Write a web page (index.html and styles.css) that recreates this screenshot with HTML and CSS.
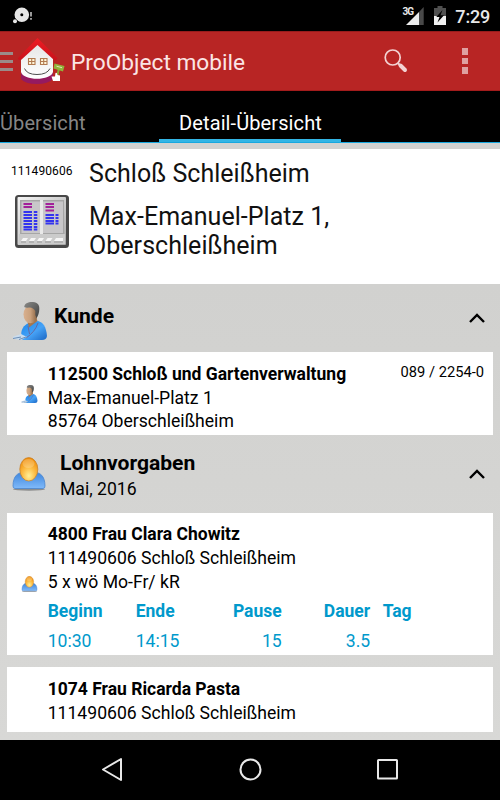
FILE: index.html
```
<!DOCTYPE html>
<html lang="de">
<head>
<meta charset="utf-8">
<title>ProObject mobile</title>
<link rel="stylesheet" href="styles.css">
</head>
<body>
<svg class="defs" width="0" height="0" aria-hidden="true">
  <defs>
    <linearGradient id="blue" x1="0" y1="0" x2="1" y2="1"><stop offset="0" stop-color="#1685ec"/><stop offset=".55" stop-color="#46a2f6"/><stop offset="1" stop-color="#1b67c4"/></linearGradient>
    <linearGradient id="skin" x1="0" y1="0" x2="1" y2="0"><stop offset="0" stop-color="#d9b08e"/><stop offset=".5" stop-color="#c9a07c"/><stop offset="1" stop-color="#86603f"/></linearGradient>
    <linearGradient id="hair" x1="0" y1="0" x2="1" y2="1"><stop offset="0" stop-color="#8a8a88"/><stop offset="1" stop-color="#3f4040"/></linearGradient>
    <linearGradient id="body" x1="0" y1="0" x2="0" y2="1"><stop offset="0" stop-color="#3f86dc"/><stop offset="1" stop-color="#80bafa"/></linearGradient>
    <radialGradient id="face" cx=".5" cy=".78" r=".75"><stop offset="0" stop-color="#fff09a"/><stop offset=".45" stop-color="#fdc04a"/><stop offset="1" stop-color="#f08c06"/></radialGradient>
    <linearGradient id="roof" x1="0" y1="0" x2="0" y2="1"><stop offset="0" stop-color="#ee1c24"/><stop offset="1" stop-color="#c8121b"/></linearGradient>
    <linearGradient id="wall" x1="0" y1="0" x2="0" y2="1"><stop offset="0" stop-color="#e4e4e4"/><stop offset="1" stop-color="#ffffff"/></linearGradient>
    <linearGradient id="metal" x1="0" y1="0" x2="1" y2="1"><stop offset="0" stop-color="#f4f4f4"/><stop offset="1" stop-color="#a8a8a8"/></linearGradient>
    <symbol id="customer" viewBox="0 0 36 38">
      <path d="M9.500 36.500C8 27 12 23 17 21L26 19C31 20.500 34 24 35 34Q34.500 38 30 38H12Q10 38 9.500 36.500Z" fill="url(#blue)"/>
      <path d="M15.500 19.500L17 25.500L25.500 19L24 15Z" fill="#a5764f"/>
      <ellipse cx="18.500" cy="12.300" rx="7" ry="9" fill="url(#skin)"/>
      <path d="M12.200 5C13 0 18 0 21 0C26 .5 27.500 3 27.300 7C27.300 11 26 14 24.500 16L23.300 13V9Q21 5 17 5.500Q14 6 12.200 5Z" fill="url(#hair)"/>
      <path d="M16 24L17.500 32M26 21Q23 30 14 36" fill="none" stroke="#6768a0" stroke-width="1"/>
      <path d="M.5 35L9 32L15 35L9 38L2 37Z" fill="#c8dcef"/>
      <path d="M1 36.500L9 35M7 37.500L14 35" stroke="#557aa6" stroke-width=".8"/>
    </symbol>
    <symbol id="person" viewBox="0 0 34 34">
      <ellipse cx="17" cy="32.200" rx="16" ry="1.500" fill="#8c8d8d"/>
      <path d="M1 29C1 19 6 15.500 11 15.500H23C28 15.500 33 19 33 29Q33 31.500 31 31.500H3Q1 31.500 1 29Z" fill="url(#body)" stroke="#4a87d0" stroke-width=".8"/>
      <ellipse cx="16.800" cy="12.300" rx="9" ry="11.700" fill="url(#face)" stroke="#c88430" stroke-width=".8"/>
      <ellipse cx="16.500" cy="6.500" rx="6" ry="4.500" fill="#fff" opacity=".2"/>
    </symbol>
  </defs>
</svg>
<div class="screen">
  <div class="status">
    <svg class="disc" width="22" height="18" viewBox="0 0 22 18"><circle cx="9.800" cy="7.800" r="7.300" fill="#e6e6e6"/><circle cx="9.800" cy="7.800" r="1.500" fill="#000"/><path d="M2 10.500L7 15.500" stroke="#000"/><circle cx="3" cy="14.300" r="2" fill="#e6e6e6"/><path d="M19 5V9.500M19 11V12.800" stroke="#ccc" stroke-width="1.500"/></svg>
    <span class="net">3G</span>
    <svg class="signal" width="19" height="18" viewBox="0 0 19 18"><path d="M1 18L14 5V18Z" fill="#ececec"/><path d="M14 5L18.700 0V18H14Z" fill="#494949"/></svg>
    <svg class="battery" width="12" height="19" viewBox="0 0 12 19"><path d="M0 2H3.500V0H8.500V2H12V10H0Z" fill="#505050"/><path d="M0 10H12V19H0Z" fill="#f1f1f1"/><path d="M8.500 4L2.300 11H5.500L3.500 16.500L10 9.200H6.500Z" fill="#000"/></svg>
    <span class="clock">7:29</span>
  </div>
  <header class="bar">
    <span class="drawer"><i></i><i></i><i></i></span>
    <svg class="logo" width="48" height="47" viewBox="0 0 48 47">
      <path d="M4 33Q22 43 36 33V41Q31 46 20 46Q8 46 4 41Z" fill="#951a60"/>
      <path d="M20.500 4L36 18V34C34 43 6 43 4 34V18Z" fill="url(#wall)"/>
      <path d="M20.500 0L40.500 20Q40.500 22 37 22L20.500 7L4 22Q.5 22 1 20Z" fill="url(#roof)"/>
      <g fill="#fff4d8" stroke="#b17a50" stroke-width="1.100"><path d="M11.500 20.500H18V26.500H11.500ZM14.700 20.500V26.500M11.500 23.500H18"/><path d="M23.500 20.500H30V26.500H23.500ZM26.700 20.500V26.500M23.500 23.500H30"/></g>
      <path d="M7.500 30.500Q10 36.500 20 36.500Q30 36.500 33 30.500" fill="none" stroke="#4e4e4e" stroke-width="1"/>
      <path d="M42 30L40.500 37" stroke="#88a735" stroke-width="2"/>
      <path d="M37.500 25.500L47.500 28L46 33.500L36.500 30.500Z" fill="#91b33b"/><path d="M39.500 28.200L45 29.700" stroke="#dce8b7" stroke-width="1"/>
      <path d="M38.500 35Q40 34 40.500 37L43 37.500V43H36L34.500 38.500L38 38.500Z" fill="#fff"/>
    </svg>
    <h1>ProObject mobile</h1>
    <svg class="search" width="24" height="24" viewBox="0 0 24 24" fill="none" stroke="#f3d2d2"><circle cx="8.700" cy="8.500" r="7.500" stroke-width="1.700"/><path d="M13.800 14L16 16.200" stroke-width="2"/><path d="M16.500 16.500L21 21" stroke-width="4" stroke-linecap="round"/></svg>
    <span class="more"><i></i><i></i><i></i></span>
  </header>
  <nav class="tabs"><span class="tab">Übersicht</span><span class="tab active">Detail-Übersicht</span></nav>
  <section class="object">
    <div class="aside">
      <div class="number">111490606</div>
      <svg class="panel" width="54" height="53" viewBox="0 0 54 53">
        <rect width="54" height="53" rx="3.500" fill="#484848"/><rect x="2.500" y="2" width="48.500" height="48" rx="1" fill="url(#metal)"/>
        <path d="M5 5H49V39H5Z" fill="#a6a6a6"/><path d="M6.500 6.500H25V38H6.500ZM28 6.500H48V38H28Z" fill="#c8c7c9"/><path d="M25 5H28V39H25Z" fill="#e9e9e9"/>
        <path d="M4 39H50V49H4Z" fill="#cbcbcb"/>
        <path d="M8.500 9H17M8.500 12H17M30.500 9H39M30.500 12H39M30.500 15.500H39" stroke="#a2219a" stroke-width="2.200"/>
        <path d="M8.500 17H17M8.500 20H17M8.500 23H17M8.500 26H17M8.500 29H17M8.500 32H17M8.500 34.500H17M18.800 17H22.300M18.800 20H22.300M18.800 23H22.300M18.800 26H22.300M18.800 29H22.300M18.800 32H22.300M18.800 34.500H22.300M30.500 20H39M30.500 23H39M30.500 26H39M30.500 28.500H39M40.500 20H43.500M40.500 23H43.500M40.500 26H43.500M40.500 28.500H43.500" stroke="#3434ef" stroke-width="2.100"/>
        <path d="M6 46L8 43H13L11 46ZM14 46L16 43H21L19 46ZM22 46L24 43H29L27 46ZM30.500 46L32.500 43H37.500L35.500 46ZM39 46L41 43H48V46Z" fill="#f6f6f6"/><path d="M6 47H11M14 47H19M22 47H27M30 47H36M39 47H48" stroke="#999"/>
      </svg>
    </div>
    <div class="address"><p class="name">Schloß Schleißheim</p><p>Max-Emanuel-Platz 1,<br>Oberschleißheim</p></div>
  </section>
  <main>
    <div class="head customer-head">
      <svg class="icon" width="36" height="38"><use href="#customer"/></svg>
      <h2>Kunde</h2>
      <svg class="chevron" width="18" height="12" viewBox="0 0 18 12"><path d="M2 10L9 3L16 10" fill="none" stroke="#000" stroke-width="2.400"/></svg>
    </div>
    <article class="card customer-card">
      <svg class="mini" width="17" height="18"><use href="#customer"/></svg>
      <div class="lines"><b>112500 Schloß und Gartenverwaltung</b><span>Max-Emanuel-Platz 1</span><span>85764 Oberschleißheim</span></div>
      <span class="phone">089 / 2254-0</span>
    </article>
    <div class="head wage-head">
      <svg class="icon" width="34" height="34"><use href="#person"/></svg>
      <div><h2>Lohnvorgaben</h2><p>Mai, 2016</p></div>
      <svg class="chevron" width="18" height="12" viewBox="0 0 18 12"><path d="M2 10L9 3L16 10" fill="none" stroke="#000" stroke-width="2.400"/></svg>
    </div>
    <article class="card wage-card">
      <svg class="mini" width="16" height="16"><use href="#person"/></svg>
      <div class="lines"><b>4800 Frau Clara Chowitz</b><span>111490606 Schloß Schleißheim</span><span>5 x wö Mo-Fr/ kR</span>
        <div class="times">
          <b>Beginn</b><b>Ende</b><b class="num">Pause</b><b class="num">Dauer</b><b class="day">Tag</b>
          <span>10:30</span><span>14:15</span><span class="num">15</span><span class="num">3.5</span>
        </div>
      </div>
    </article>
    <article class="card last-card"><div class="lines"><b>1074 Frau Ricarda Pasta</b><span>111490606 Schloß Schleißheim</span></div></article>
  </main>
  <footer class="system">
    <svg width="22" height="25" viewBox="0 0 22 25"><path d="M2 12.500L20 2V23Z"/></svg>
    <svg width="23" height="23" viewBox="0 0 23 23"><circle cx="11.500" cy="11.500" r="10"/></svg>
    <svg width="21" height="21" viewBox="0 0 21 21"><rect x="1" y="1" width="19" height="18.500" rx=".5"/></svg>
  </footer>
</div>
</body>
</html>
```

FILE: styles.css
```
* { box-sizing: border-box; }
body { margin: 0; font-family: Roboto, "Noto Sans", sans-serif; color: #000; background: #000; }
h1, h2, p { margin: 0; }
.defs { display: block; height: 0; }
.screen { width: 500px; height: 800px; overflow: hidden; display: flex; flex-direction: column; }
.status { height: 31px; background: #000; display: flex; align-items: flex-start; padding: 7px 10px 0 12px; color: #e8e8e8; }
.net { margin-left: auto; font-size: 10px; line-height: 10px; font-weight: 700; letter-spacing: -.8px; }
.signal { margin: 0 10px 0 -8px; }
.battery { margin: -1px 9px 0 0; }
.clock { font-size: 18px; line-height: 20px; font-weight: 500; letter-spacing: -.2px; }
.bar { height: 60px; background: #b82524; display: flex; align-items: center; border-top: 1px solid #981c1c; border-bottom: 1px solid #a31c1c; }
.drawer { width: 13px; display: grid; gap: 5px; }
.drawer i { height: 3px; background: #9b8b89; }
.logo { margin: 1px 0 0 4px; }
h1 { margin: 3px 0 0 6px; font-size: 22.700px; font-weight: 400; color: #fbe5e5; line-height: 28px; }
.search { margin-left: auto; }
.more { display: grid; gap: 3px; margin: 0 32px 0 54.500px; }
.more i { width: 6px; height: 6.500px; background: #dfa0a0; }
.tabs { height: 52px; background: #000; display: flex; border-bottom: 1.500px solid #18a8df; font-size: 20px; line-height: 65px; }
.tab { width: 159px; color: #858585; letter-spacing: .1px; }
.tab.active { width: 182px; height: 51px; color: #fff; text-align: center; border-bottom: 3px solid #33b5e5; padding-left: 1px; }
.object { height: 141px; border-top: 6px solid #d2d2d0; background: #fff; display: flex; }
.aside { width: 89px; padding: 15px 0 0 11px; }
.number { font-size: 12px; line-height: 14px; letter-spacing: .1px; }
.panel { display: block; margin: 17px 0 0 4px; }
.address { font-size: 25px; line-height: 29px; padding-top: 10px; color: #111; letter-spacing: .04px; }
.name { margin-bottom: 14px; }
main { height: 456px; background: linear-gradient(#d1d1cf, #d8d8d6); padding: 0 7px; }
.head { display: flex; align-items: flex-start; }
.head .icon { flex: none; }
h2 { font-size: 21.100px; line-height: 25px; font-weight: 700; }
.chevron { margin-left: auto; margin-right: 7px; }
.customer-head { height: 68px; padding: 18px 0 0 5px; }
.customer-head h2 { margin: 1px 0 0 6px; }
.customer-head .chevron { margin-top: 10px; }
.wage-head { height: 77.500px; padding: 15px 0 0 5px; }
.wage-head .icon { margin-top: 7px; }
.wage-head div { margin-left: 14px; font-size: 17.600px; line-height: 28px; }
.wage-head .chevron { margin-top: 18px; }
.card { background: #fff; display: flex; padding: 10px 9px 0 14px; font-size: 17.600px; line-height: 23.700px; }
.card b { font-size: 17.500px; }
.mini { flex: none; width: 17px; }
.lines { margin: .6px 0 0 9.700px; display: flex; flex-direction: column; }
.customer-card { height: 83px; }
.customer-card .lines { margin-top: 1px; }
.customer-card .mini { margin-top: 23px; }
.phone { margin-left: auto; font-size: 14.700px; line-height: 21px; }
.wage-card { height: 142.500px; }
.wage-card .mini { margin-top: 53px; }
.times { margin-top: 1.500px; display: grid; grid-template-columns: 88px 68px 78px 88.500px 60px; line-height: 30px; color: #0099cc; }
.num { text-align: right; }
.day { padding-left: 12.500px; }
.last-card { height: 65px; margin-top: 12px; padding-top: 10.500px; }
.last-card .lines { margin-left: 26.700px; }
.system { height: 60px; background: #000; display: flex; align-items: center; justify-content: center; gap: 115.500px; padding: 0 1px 1px 0; }
.system svg { fill: none; stroke: #e8e8e8; stroke-width: 2; stroke-linejoin: round; }
```
